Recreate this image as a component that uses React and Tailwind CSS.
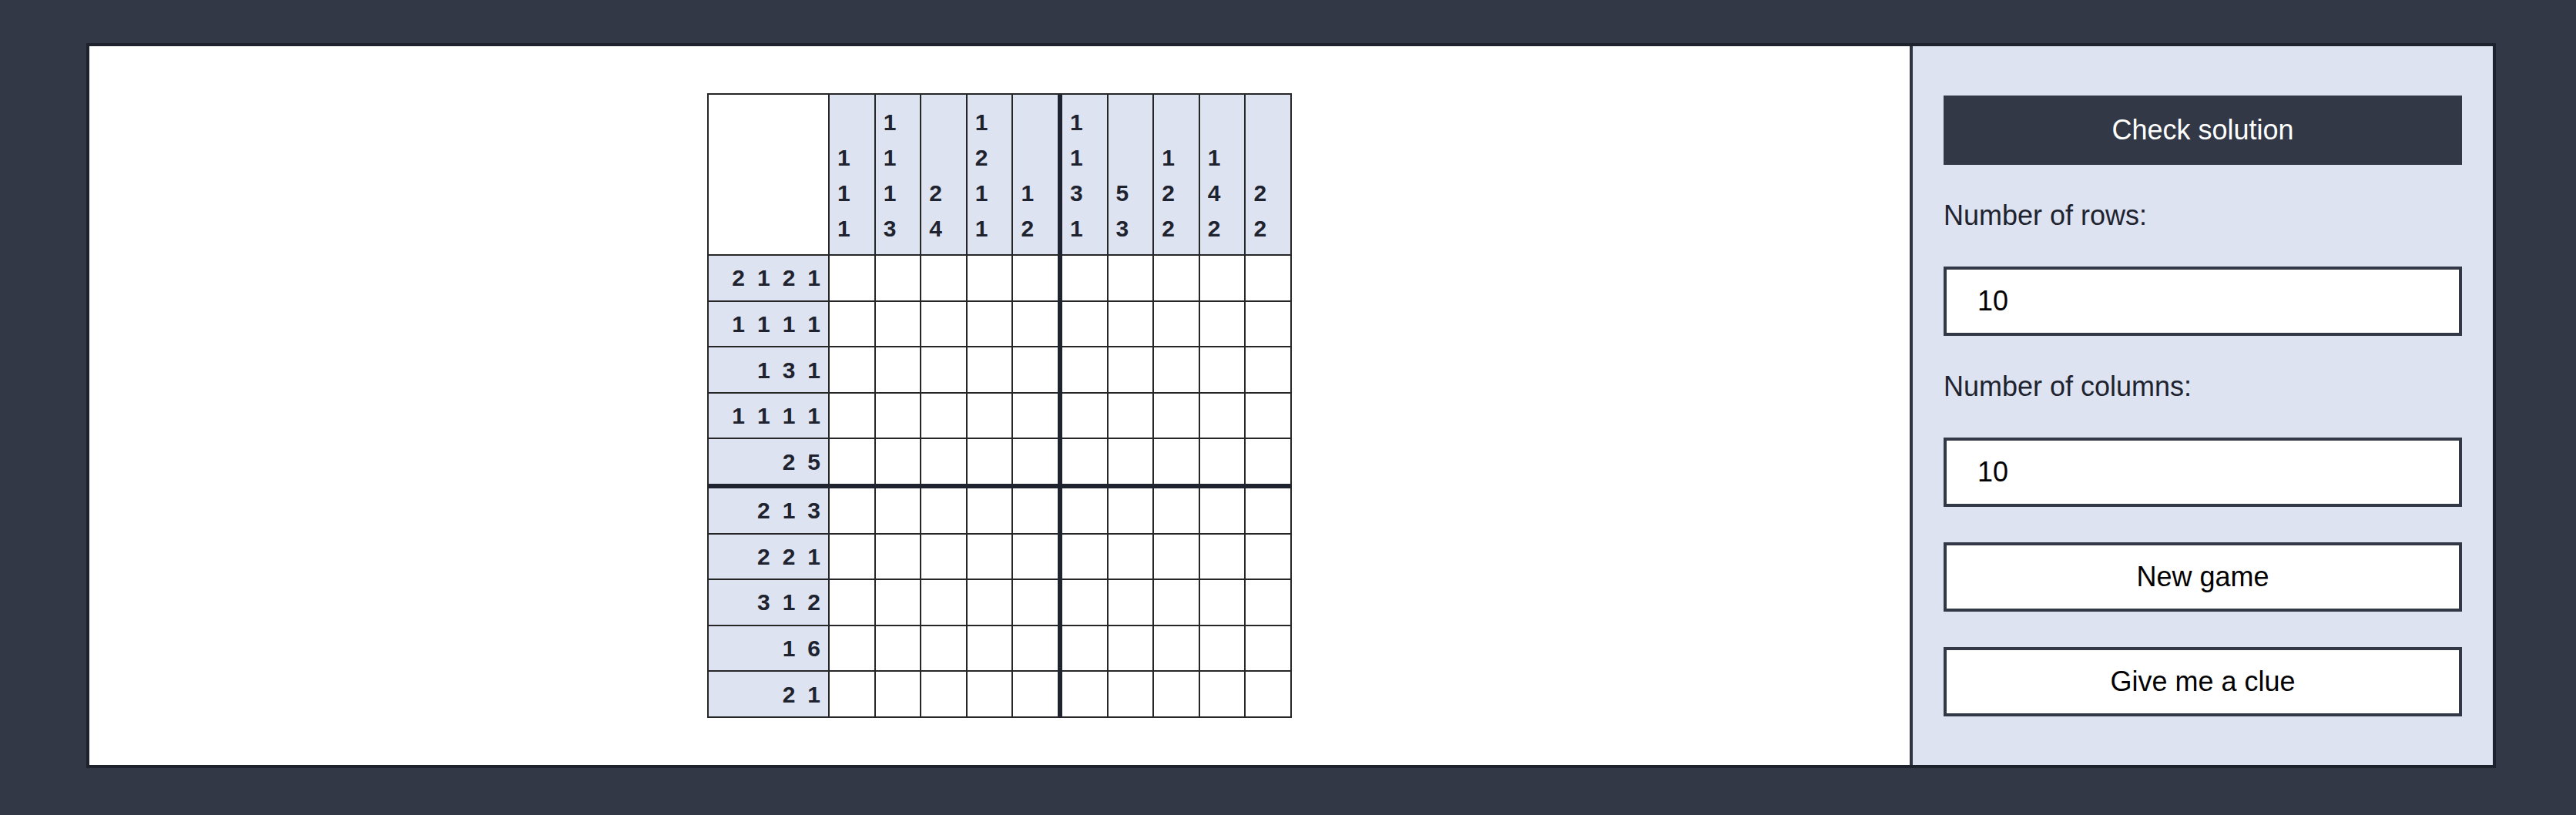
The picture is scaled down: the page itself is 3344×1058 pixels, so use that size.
import { useState } from "react"

const COLUMN_CLUES = [
  [1, 1, 1],
  [1, 1, 1, 3],
  [2, 4],
  [1, 2, 1, 1],
  [1, 2],
  [1, 1, 3, 1],
  [5, 3],
  [1, 2, 2],
  [1, 4, 2],
  [2, 2],
]

const ROW_CLUES = [
  [2, 1, 2, 1],
  [1, 1, 1, 1],
  [1, 3, 1],
  [1, 1, 1, 1],
  [2, 5],
  [2, 1, 3],
  [2, 2, 1],
  [3, 1, 2],
  [1, 6],
  [2, 1],
]

const ColumnClue = ({ clue, thick }) => (
  <div
    className={`h-[209px] bg-[#dde3f0] border-b-2 border-b-[#262626] flex flex-col justify-end pl-[10px] pb-[10px] text-[30px] leading-[46px] font-bold text-[#1f2330] ${
      thick ? "w-[63.6px] border-r-[6px] border-r-[#1f2330]" : "w-[59.6px] border-r-2 border-r-[#262626]"
    }`}
  >
    {clue.map((n, i) => (
      <span key={i}>{n}</span>
    ))}
  </div>
)

const Cell = ({ thickRight, thickBottom, filled, onClick }) => (
  <div
    onClick={onClick}
    className={`${filled ? "bg-[#1f2330]" : "bg-white"} ${
      thickRight ? "w-[63.6px] border-r-[6px] border-r-[#1f2330]" : "w-[59.6px] border-r-2 border-r-[#262626]"
    } ${thickBottom ? "h-[63.6px] border-b-[6px] border-b-[#1f2330]" : "h-[59.6px] border-b-2 border-b-[#262626]"}`}
  />
)

const Board = () => {
  const [filled, setFilled] = useState({})

  const toggle = (r, c) => setFilled((prev) => ({ ...prev, [`${r}-${c}`]: !prev[`${r}-${c}`] }))

  return (
    <div className="border-l-2 border-t-2 border-[#262626]">
      <div className="flex">
        <div className="w-[157px] h-[209px] bg-white border-r-2 border-b-2 border-[#262626]" />
        {COLUMN_CLUES.map((clue, c) => (
          <ColumnClue key={c} clue={clue} thick={c === 4} />
        ))}
      </div>
      {ROW_CLUES.map((clue, r) => (
        <div key={r} className="flex">
          <div
            className={`w-[157px] bg-[#dde3f0] border-r-2 border-r-[#262626] flex items-center justify-end gap-4 pr-[10px] text-[30px] font-bold text-[#1f2330] ${
              r === 4 ? "h-[63.6px] border-b-[6px] border-b-[#1f2330]" : "h-[59.6px] border-b-2 border-b-[#262626]"
            }`}
          >
            {clue.map((n, i) => (
              <span key={i}>{n}</span>
            ))}
          </div>
          {COLUMN_CLUES.map((_, c) => (
            <Cell
              key={c}
              thickRight={c === 4}
              thickBottom={r === 4}
              filled={filled[`${r}-${c}`]}
              onClick={() => toggle(r, c)}
            />
          ))}
        </div>
      ))}
    </div>
  )
}

const Sidebar = () => {
  const [rows, setRows] = useState("10")
  const [cols, setCols] = useState("10")

  return (
    <aside className="w-[757px] bg-[#dde3f0] border-l-4 border-[#2e3340] flex flex-col justify-center gap-[46px] px-10 text-[36px]">
      <button className="h-[90px] w-full bg-[#333846] text-white">Check solution</button>
      <label className="leading-[40px] text-[#1f2330]">Number of rows:</label>
      <input
        value={rows}
        onChange={(e) => setRows(e.target.value)}
        className="h-[90px] w-full bg-white border-4 border-[#333846] px-10 text-black outline-none"
      />
      <label className="leading-[40px] text-[#1f2330]">Number of columns:</label>
      <input
        value={cols}
        onChange={(e) => setCols(e.target.value)}
        className="h-[90px] w-full bg-white border-4 border-[#333846] px-10 text-black outline-none"
      />
      <button className="h-[90px] w-full bg-white border-4 border-[#333846] text-black">New game</button>
      <button className="h-[90px] w-full bg-white border-4 border-[#333846] text-black">Give me a clue</button>
    </aside>
  )
}

export default function App() {
  return (
    <div className="min-h-screen bg-[#333846] pt-[56px] pl-[112px] font-['Liberation_Sans',Arial,sans-serif]">
      <div className="flex w-[3128px] h-[941px] border-4 border-[#1e222c]">
        <main className="flex-1 bg-white flex items-center justify-center">
          <Board />
        </main>
        <Sidebar />
      </div>
    </div>
  )
}
